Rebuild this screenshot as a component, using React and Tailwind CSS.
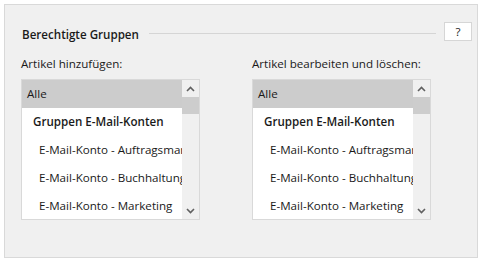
import React from "react";

const ROWS = [
  { label: "Alle", indent: "pl-[5px]", selected: true },
  { label: "Gruppen E-Mail-Konten", indent: "pl-[11px]", bold: true },
  { label: "E-Mail-Konto - Auftragsmanagement", indent: "pl-[17px]" },
  { label: "E-Mail-Konto - Buchhaltung", indent: "pl-[17px]" },
  { label: "E-Mail-Konto - Marketing", indent: "pl-[17px]" },
];

function Chevron({ up }) {
  return (
    <svg width="9" height="6" viewBox="0 0 9 6" className="block">
      <path
        d={up ? "M1 5 L4.5 1.5 L8 5" : "M1 1 L4.5 4.5 L8 1"}
        fill="none"
        stroke="#606060"
        strokeWidth="1.6"
      />
    </svg>
  );
}

function GroupList() {
  return (
    <div className="flex h-[141px] w-[179px] border border-[#d9d9d9] bg-white">
      <div className="flex-1 overflow-hidden">
        {ROWS.map((r) => (
          <div
            key={r.label}
            className={`flex h-[28px] items-center whitespace-nowrap ${r.indent} ${r.selected ? "bg-[#cccccc]" : ""} ${r.bold ? "font-semibold" : ""}`}
          >
            {r.label}
          </div>
        ))}
      </div>
      {/* scrollbar */}
      <div className="flex w-[17px] flex-col bg-[#f0f0f0]">
        <div className="flex h-[17px] items-center justify-center">
          <Chevron up />
        </div>
        <div className="h-[17px] bg-[#cdcdcd]" />
        <div className="flex-1" />
        <div className="flex h-[17px] items-center justify-center">
          <Chevron />
        </div>
      </div>
    </div>
  );
}

export default function App() {
  return (
    <div
      className="h-[262px] w-[483px] bg-white p-[4px] text-[11.6px] text-[#1a1a1a]"
      style={{ fontFamily: '"Open Sans", "Noto Sans", sans-serif' }}
    >
      <div className="h-[254px] w-[474px] border border-[#d9d9d9] bg-[#f0f0f0] pl-[16px] pr-[5px] pt-[17px]">
        {/* header */}
        <div className="flex items-start">
          <div className="ml-[1px] mt-[5px] font-semibold leading-[16px]">Berechtigte Gruppen</div>
          <div className="ml-[10px] mr-[8px] mt-[11px] h-px flex-1 bg-[#d5d5d5]" />
          <button className="flex h-[19px] w-[28px] items-center justify-center border border-[#d6d6d6] bg-white leading-none">
            ?
          </button>
        </div>

        {/* lists */}
        <div className="mt-[13px] flex gap-[52px]">
          <div>
            <div className="leading-[16px]">Artikel hinzufügen:</div>
            <div className="mt-[7px]">
              <GroupList />
            </div>
          </div>
          <div>
            <div className="leading-[16px]">Artikel bearbeiten und löschen:</div>
            <div className="mt-[7px]">
              <GroupList />
            </div>
          </div>
        </div>
      </div>
    </div>
  );
}
